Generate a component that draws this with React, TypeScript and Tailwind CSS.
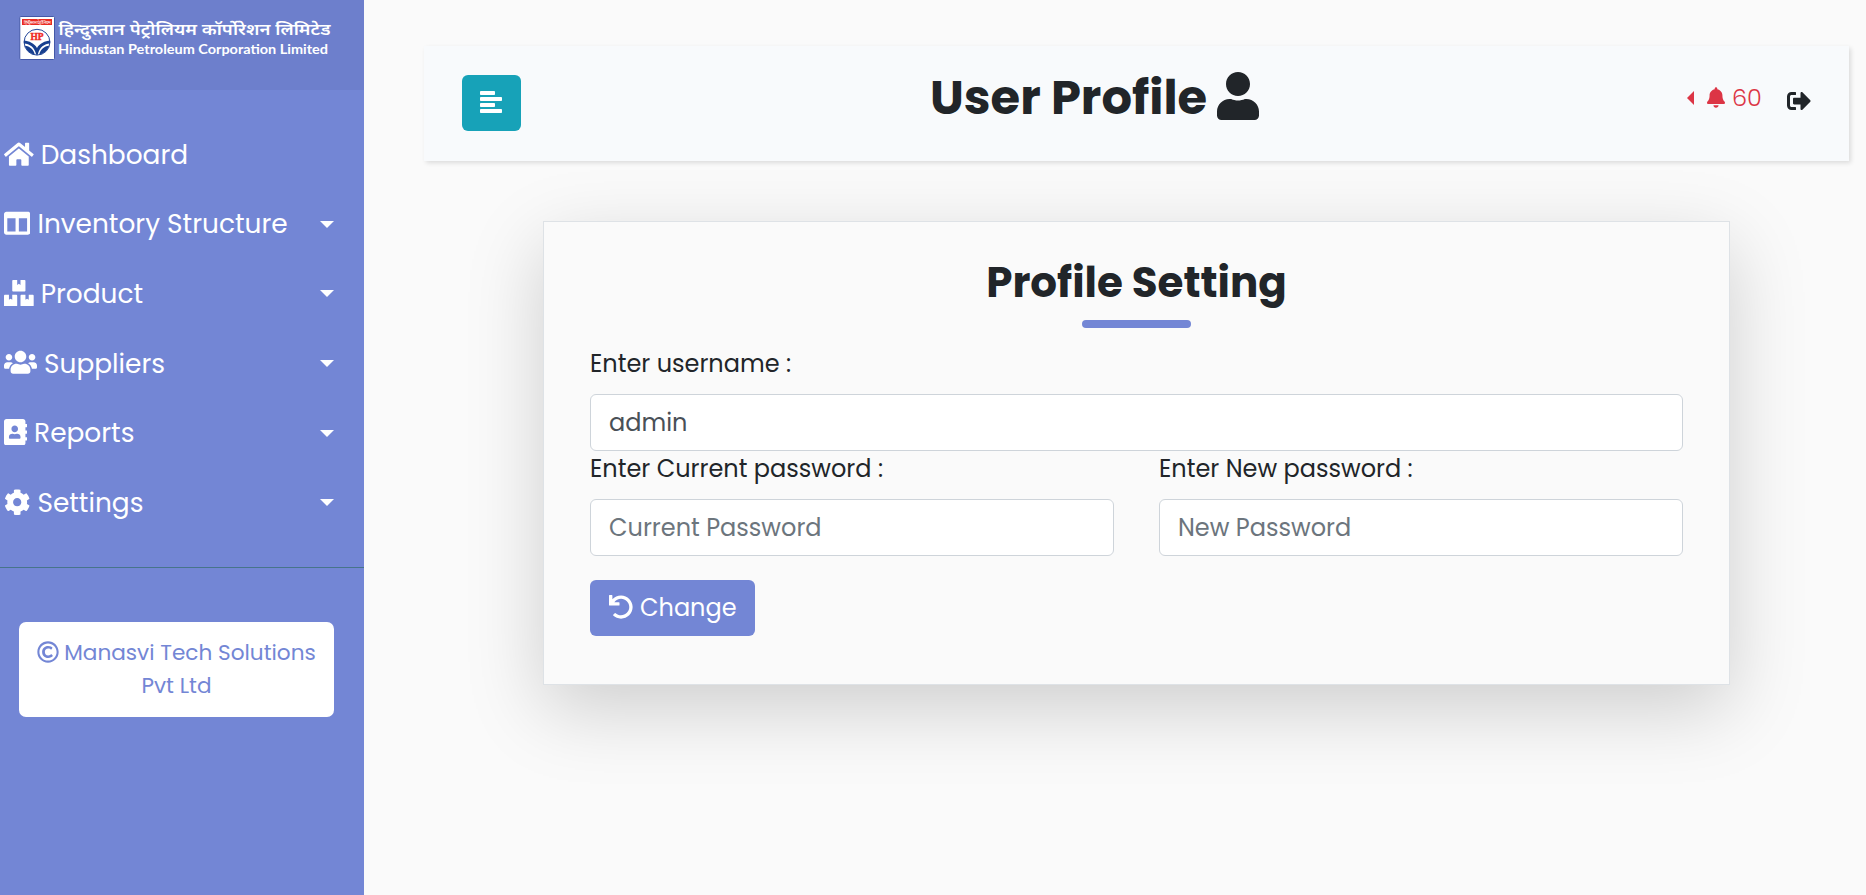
import type { ComponentType } from "react";
import {
  FaAddressBook,
  FaBell,
  FaBoxes,
  FaCog,
  FaColumns,
  FaHome,
  FaRegCopyright,
  FaSignOutAlt,
  FaUndo,
  FaUser,
  FaUsers,
} from "react-icons/fa";

type NavItem = {
  label: string;
  Icon: ComponentType<{ className?: string }>;
  iconClass: string;
  caret: boolean;
};

const navItems: NavItem[] = [
  { label: "Dashboard", Icon: FaHome, iconClass: "w-[29.7px]", caret: false },
  { label: "Inventory Structure", Icon: FaColumns, iconClass: "w-[26.4px]", caret: true },
  { label: "Product", Icon: FaBoxes, iconClass: "w-[29.7px]", caret: true },
  { label: "Suppliers", Icon: FaUsers, iconClass: "w-[33px]", caret: true },
  { label: "Reports", Icon: FaAddressBook, iconClass: "w-[23.1px]", caret: true },
  { label: "Settings", Icon: FaCog, iconClass: "w-[26.4px]", caret: true },
];

function Logo() {
  return (
    <svg width="320" height="48" viewBox="0 0 320 48" className="block">
      <rect x="0.8" y="0.5" width="34.700" height="43" rx="1" fill="#fff" stroke="#4358a8" />
      <rect x="3" y="3" width="30" height="6" fill="#ea2a22" />
      <text x="18" y="7.800" textAnchor="middle" fontSize="4.6" fill="#fff" textLength="27" fontFamily="'Noto Sans', sans-serif">हिन्दुस्तान पेट्रोलियम</text>
      <circle cx="18" cy="26.200" r="12.9" fill="#fff" stroke="#24479a" strokeWidth="1" />
      <path d="M4.8 24.800 C10 24.800 15.500 27.500 18 32 C20.500 27.500 26 24.800 31.200 24.800 L31 27.500 C25.500 27.800 20.500 31 18.800 38.800 H17.200 C15.500 31 10.500 27.800 5 27.500 Z" fill="#173f8f" />
      <path d="M5.800 29.800 C11 30.300 14.800 33.500 15.800 38.800 C11.500 37.800 7.500 34.500 5.800 29.800 Z M30.200 29.800 C25 30.300 21.200 33.500 20.200 38.800 C24.500 37.800 28.500 34.500 30.200 29.800 Z" fill="#173f8f" />
      <text x="18" y="24.200" textAnchor="middle" fontSize="10.500" fontWeight="700" fill="#ee2c24" stroke="#ee2c24" strokeWidth="0.5" textLength="13" lengthAdjust="spacingAndGlyphs" fontFamily="'Liberation Serif', serif">HP</text>
      <text x="39.500" y="18.500" fontSize="15.500" fontWeight="600" fill="#fff" textLength="272" lengthAdjust="spacingAndGlyphs" fontFamily="'Noto Sans', sans-serif">हिन्दुस्तान पेट्रोलियम कॉर्पोरेशन लिमिटेड</text>
      <text x="39" y="38" fontSize="14" fontWeight="700" fill="#fff" textLength="270" lengthAdjust="spacingAndGlyphs" fontFamily="Lato, sans-serif">Hindustan Petroleum Corporation Limited</text>
    </svg>
  );
}

function CaretDown() {
  return (
    <svg width="14" height="7" viewBox="0 0 14 7" className="block">
      <path d="M0 0H14L7 7Z" fill="currentColor" />
    </svg>
  );
}

function MenuLines() {
  return (
    <svg width="22" height="22" viewBox="0 0 22 22" fill="currentColor" className="-ml-px">
      <rect width="15" height="4" rx="0.8" />
      <rect y="6" width="22" height="4" rx="0.8" />
      <rect y="12" width="15" height="4" rx="0.8" />
      <rect y="18" width="22" height="4" rx="0.8" />
    </svg>
  );
}

function Sidebar() {
  return (
    <aside className="flex h-[895px] w-[364px] shrink-0 flex-col bg-[#7386d5] text-white">
      <div className="h-[90px] bg-[#6d7fcc] pt-4 pl-[19px]">
        <Logo />
      </div>
      <nav className="h-[478px] border-b border-[#47748b] pt-[30px]">
        {navItems.map(({ label, Icon, iconClass, caret }) => (
          <a key={label} className="flex h-[69.6px] items-center pr-[30px] pl-1 text-[26.4px] leading-[40px]">
            <Icon className={`-mt-0.5 h-[26.4px] shrink-0 ${iconClass}`} />
            <span className="ml-[7px] flex-1 whitespace-nowrap">{label}</span>
            {caret && <CaretDown />}
          </a>
        ))}
      </nav>
      <a className="mt-[54px] ml-[19px] block h-[95px] w-[315px] rounded-[7px] bg-white pt-[14px] text-center text-[21.6px] leading-[33px] text-[#7386d5]">
        <span className="flex items-center justify-center whitespace-nowrap">
          <FaRegCopyright className="mr-[5px] -mt-0.5 size-[22px]" />
          Manasvi Tech Solutions
        </span>
        <span className="block">Pvt Ltd</span>
      </a>
    </aside>
  );
}

function TopBar() {
  return (
    <header className="flex h-[115px] w-[1425px] bg-[#f8fafc] pr-[38px] pl-[38px] shadow-[1.5px_1.5px_4.5px_rgba(0,0,0,0.12)]">
      <button className="mt-[29px] flex h-14 w-[59px] shrink-0 justify-center rounded-md bg-[#17a2b8] pt-4 text-white">
        <MenuLines />
      </button>
      <h1 className="mt-[22px] ml-[409px] flex h-[60px] items-center whitespace-nowrap text-[48px] leading-[60px] font-bold">
        <span className="w-[287px]">User Profile</span>
        <FaUser className="-mt-1 h-12 w-[42px]" />
      </h1>
      <div className="mt-[33px] ml-auto flex h-9 items-center text-[24px] leading-9">
        <span className="flex items-center text-[#dc3545]">
          <svg width="7" height="14" viewBox="0 0 7 14" className="mt-0.5">
            <path d="M7 0V14L0 7Z" fill="currentColor" />
          </svg>
          <FaBell className="ml-[13px] h-[21px] w-[18px]" />
          <span className="mt-0.5 ml-[7px] w-[31px] font-light">60</span>
        </span>
        <FaSignOutAlt className="mt-[7px] ml-[24px] size-6" />
      </div>
    </header>
  );
}

function Field({ label, value, placeholder }: { label: string; value?: string; placeholder?: string }) {
  return (
    <label className="block">
      <span className="block h-12 text-[24px] leading-9">{label}</span>
      <input
        className="block h-[57px] w-full rounded-md border border-[#ced4da] bg-white px-[18px] text-[24px] text-[#495057] placeholder:text-[#6c757d]"
        defaultValue={value}
        placeholder={placeholder}
      />
    </label>
  );
}

function ProfileCard() {
  return (
    <section className="mt-[60px] ml-[119px] h-[464px] w-[1187px] border border-[#dee2e6] bg-[#fafafa] px-[46px] pt-9 shadow-[0_24px_72px_rgba(0,0,0,0.175)]">
      <h2 className="text-center text-[42px] leading-[50px] font-bold">Profile Setting</h2>
      <div className="mx-auto mt-3 h-2 w-[109px] rounded-[4px] bg-[#7386d5]" />
      <form className="mt-[18px]">
        <Field label="Enter username :" value="admin" />
        <div className="grid grid-cols-2 gap-[45px]">
          <Field label="Enter Current password :" placeholder="Current Password" />
          <Field label="Enter New password :" placeholder="New Password" />
        </div>
        <button type="button" className="mt-6 flex h-14 w-[165px] items-center rounded-md bg-[#7386d5] pl-[19px] text-[24px] text-white">
          <FaUndo className="-mt-0.5 mr-[7px] size-6" />
          Change
        </button>
      </form>
    </section>
  );
}

export default function App() {
  return (
    <div className="flex h-[895px] w-[1866px] overflow-hidden bg-[#fafafa] font-['Poppins','Inter',sans-serif] text-[#212529]">
      <Sidebar />
      <main className="pt-[46px] pl-[60px]">
        <TopBar />
        <ProfileCard />
      </main>
    </div>
  );
}
